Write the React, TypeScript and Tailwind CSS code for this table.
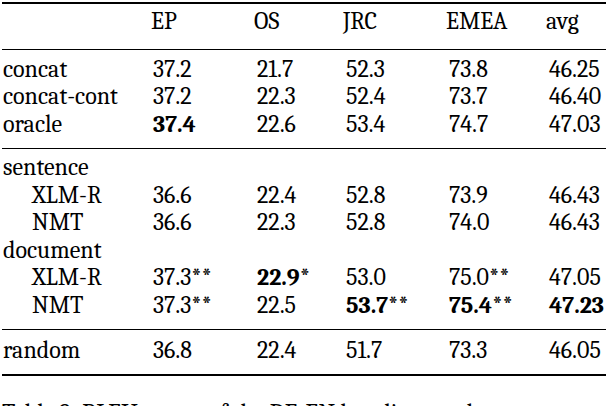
const cols = "grid grid-cols-[150px_104px_89px_103px_100px_60px]";

type Cell = { v: string; b?: boolean; s?: string };
type Row = { label: string; indent?: boolean; cells?: Cell[] };

const c = (v: string, b?: boolean, s?: string): Cell => ({ v, b, s });

const block1: Row[] = [
  { label: "concat", cells: [c("37.2"), c("21.7"), c("52.3"), c("73.8"), c("46.25")] },
  { label: "concat-cont", cells: [c("37.2"), c("22.3"), c("52.4"), c("73.7"), c("46.40")] },
  { label: "oracle", cells: [c("37.4", true), c("22.6"), c("53.4"), c("74.7"), c("47.03")] },
];

const block2: Row[] = [
  { label: "sentence" },
  { label: "XLM-R", indent: true, cells: [c("36.6"), c("22.4"), c("52.8"), c("73.9"), c("46.43")] },
  { label: "NMT", indent: true, cells: [c("36.6"), c("22.3"), c("52.8"), c("74.0"), c("46.43")] },
  { label: "document" },
  { label: "XLM-R", indent: true, cells: [c("37.3", false, "**"), c("22.9", true, "*"), c("53.0"), c("75.0", false, "**"), c("47.05")] },
  { label: "NMT", indent: true, cells: [c("37.3", false, "**"), c("22.5"), c("53.7", true, "**"), c("75.4", true, "**"), c("47.23", true)] },
];

const block3: Row[] = [
  { label: "random", cells: [c("36.8"), c("22.4"), c("51.7"), c("73.3"), c("46.05")] },
];

function TableRow({ row }: { row: Row }) {
  return (
    <div className={`${cols} h-[27.5px] items-center`}>
      <div className={row.indent ? "pl-[32px]" : "pl-[3px]"}>{row.label}</div>
      {row.cells?.map((cell, i) => (
        <div key={i} className="pl-[3px]">
          <span className={cell.b ? "font-bold" : ""}>{cell.v}</span>
          {cell.s}
        </div>
      ))}
    </div>
  );
}

export default function App() {
  return (
    <div className="w-[606px] h-[406px] overflow-hidden bg-white text-black text-[24px] leading-[27.5px] font-serif">
      <div className="mt-[2px] ml-[2px] border-t-2 border-black" />
      <div className={`${cols} pt-[4px] pb-[13px]`}>
        <div />
        <div className="pl-[1px]">EP</div>
        <div>OS</div>
        <div>JRC</div>
        <div>EMEA</div>
        <div>avg</div>
      </div>
      <div className="ml-[2px] border-t border-black" />
      <div className="pt-[6px] pb-[10px]">
        {block1.map((r) => (
          <TableRow key={r.label} row={r} />
        ))}
      </div>
      <div className="ml-[2px] border-t border-black" />
      <div className="pt-[5px] pb-[10px]">
        {block2.map((r, i) => (
          <TableRow key={i} row={r} />
        ))}
      </div>
      <div className="ml-[2px] border-t border-black" />
      <div className="pt-[7px] pb-[9px]">
        {block3.map((r) => (
          <TableRow key={r.label} row={r} />
        ))}
      </div>
      <div className="ml-[2px] border-t-2 border-black" />
      <p className="mt-[24px] pl-[2px]">Table 2: BLEU scores of the DE-EN baselines and</p>
    </div>
  );
}
